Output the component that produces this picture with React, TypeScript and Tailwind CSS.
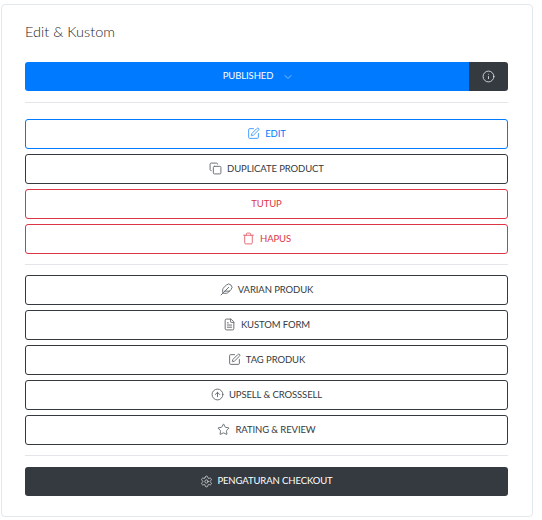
import React from "react";
import { SquarePen, Copy, Trash, Feather, FileText, CircleArrowUp, Star, Settings, ChevronDown, Info } from "lucide-react";

const font = "font-['Lato','Open_Sans',sans-serif]";
const ic = "w-[13px] h-[13px] opacity-75";

function Btn({ tone, icon, label }: { tone: "blue" | "dark" | "red"; icon?: React.ReactNode; label: React.ReactNode }) {
  const cls =
    tone === "blue"
      ? "border-[#007bff] text-[#007bff]"
      : tone === "red"
      ? "border-[#dc3545] text-[#dc3545]"
      : "border-[#343a40] text-[#343a40]";
  return (
    <button className={`h-[29.5px] w-full rounded-[3px] border bg-white flex items-center justify-center gap-[5px] text-[9.5px] leading-none tracking-[-0.1px] pb-[1px] ${cls}`}>
      {icon}
      <span>{label}</span>
    </button>
  );
}

export default function App() {
  return (
    <div className={`w-[542px] h-[520px] bg-white pt-[4px] pl-[1px] ${font}`}>
      <div className="w-[532px] h-[513px] rounded-[4px] border border-[#e3e8ee] bg-white px-[23px] pt-[18px]">
        <h5 className="text-[14.5px] leading-[17px] font-light text-[#1f2328] h-[17px]">Edit &amp; Kustom</h5>
        <div className="mt-[22px] flex h-[29px] w-[483px] rounded-[3px] overflow-hidden text-white">
          <div className="flex-1 bg-[#007bff] flex items-center justify-center gap-[9px] pl-[23px] text-[9.5px] tracking-[-0.1px]">
            <span>PUBLISHED</span>
            <ChevronDown className="w-[12px] h-[12px] opacity-70" strokeWidth={1.5} />
          </div>
          <div className="w-[39px] bg-[#343a40] flex items-center justify-center">
            <Info className="w-[13px] h-[13px] opacity-90" strokeWidth={1.5} />
          </div>
        </div>
        <div className="mt-[11px] h-px w-[483px] bg-[#e3e5e8]" />
        <div className="mt-[16px] w-[483px] flex flex-col gap-[5.5px]">
          <Btn tone="blue" icon={<SquarePen className={ic} strokeWidth={1.75} />} label="EDIT" />
          <Btn tone="dark" icon={<Copy className={ic} strokeWidth={1.75} />} label="DUPLICATE PRODUCT" />
          <Btn tone="red" label="TUTUP" />
          <Btn tone="red" icon={<Trash className={ic} strokeWidth={1.75} />} label="HAPUS" />
        </div>
        <div className="mt-[10.5px] h-px w-[483px] bg-[#e3e5e8]" />
        <div className="mt-[10px] w-[483px] flex flex-col gap-[5.5px]">
          <Btn tone="dark" icon={<Feather className={ic} strokeWidth={1.75} />} label="VARIAN PRODUK" />
          <Btn tone="dark" icon={<FileText className={ic} strokeWidth={1.75} />} label="KUSTOM FORM" />
          <Btn tone="dark" icon={<SquarePen className={ic} strokeWidth={1.75} />} label="TAG PRODUK" />
          <Btn tone="dark" icon={<CircleArrowUp className={ic} strokeWidth={1.75} />} label="UPSELL & CROSSSELL" />
          <Btn tone="dark" icon={<Star className={ic} strokeWidth={1.75} />} label="RATING & REVIEW" />
        </div>
        <div className="mt-[10.5px] h-px w-[483px] bg-[#e3e5e8]" />
        <button className="mt-[11px] h-[29px] w-[483px] rounded-[3px] bg-[#343a40] text-white flex items-center justify-center gap-[4px] text-[9.5px] leading-none tracking-[-0.1px] pb-[1px]">
          <Settings className="w-[13px] h-[13px] opacity-80" strokeWidth={1.5} />
          <span>PENGATURAN CHECKOUT</span>
        </button>
      </div>
    </div>
  );
}
